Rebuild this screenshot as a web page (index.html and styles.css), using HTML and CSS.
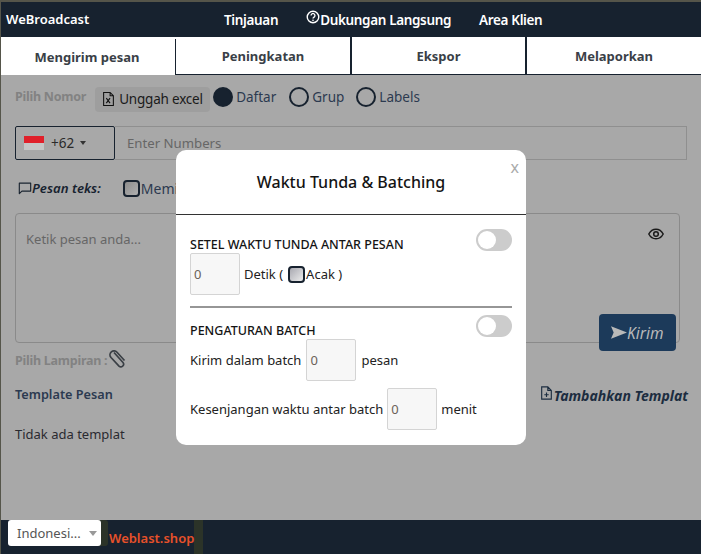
FILE: index.html
```html
<!DOCTYPE html>
<html lang="id">
<head>
<meta charset="utf-8">
<title>WeBroadcast</title>
<link rel="stylesheet" href="styles.css">
</head>
<body>
<div class="app">
  <header class="topbar">
    <div class="brand">WeBroadcast</div>
    <nav class="topnav">
      <a>Tinjauan</a>
      <a class="help"><svg class="help-icon" viewBox="0 0 16 16"><circle cx="8" cy="8" r="6.6" fill="none" stroke="currentColor" stroke-width="1.6"/><path d="M5.8 6.2a2.2 2.2 0 1 1 3.4 1.9c-.8.5-1.2.9-1.2 1.7" fill="none" stroke="currentColor" stroke-width="1.5"/><circle cx="8" cy="11.8" r=".95" fill="currentColor"/></svg>Dukungan Langsung</a>
      <a>Area Klien</a>
    </nav>
  </header>
  <div class="tabs">
    <div class="tab tab-active">Mengirim pesan</div>
    <div class="tab">Peningkatan</div>
    <div class="tab">Ekspor</div>
    <div class="tab tab-last">Melaporkan</div>
  </div>
  <main class="content">
    <div class="row-number">
      <span class="muted-label">Pilih Nomor</span>
      <span class="upload"><svg class="upload-icon" viewBox="0 0 16 18"><path d="M2 1h8l4 4v12H2z M10 1v4h4" fill="none" stroke="#111" stroke-width="1.3"/><path d="M5.3 8l4.6 6M9.900 8l-4.600 6" stroke="#111" stroke-width="1.4"/></svg>Unggah excel</span>
      <span class="radio radio-on"></span><span class="radio-label">Daftar</span>
      <span class="radio radio-gap1"></span><span class="radio-label">Grup</span>
      <span class="radio radio-gap2"></span><span class="radio-label">Labels</span>
    </div>
    <div class="row-phone">
      <div class="country"><span class="flag"></span><span>+62</span><span class="caret"></span></div>
      <div class="numbers">Enter Numbers</div>
    </div>
    <div class="row-message">
      <svg class="chat-icon" viewBox="0 0 16 16"><path d="M1.500 2.500h13v9H4.500l-3 3z" fill="none" stroke="#1a2430" stroke-width="1.300" stroke-linejoin="round"/></svg>
      <span class="message-label">Pesan teks:</span>
      <span class="check check-gap"></span><span class="memi">Memilih</span>
    </div>
    <div class="textarea">
      <span class="placeholder">Ketik pesan anda...</span>
      <svg class="eye" viewBox="0 0 16 16"><path d="M.8 8C2.500 4.800 5 3.200 8 3.200s5.500 1.600 7.200 4.800C13.500 11.200 11 12.800 8 12.800S2.500 11.200.8 8z" fill="none" stroke="#1a1a1a" stroke-width="1.500"/><circle cx="8" cy="8" r="2.300" fill="none" stroke="#1a1a1a" stroke-width="1.500"/></svg>
      <span class="send"><svg class="send-icon" viewBox="0 0 18 16"><path d="M0 1l18 7-18 7 3-7z" fill="#b9b9b9"/></svg>Kirim</span>
    </div>
    <div class="row-attach">
      <span class="muted-label">Pilih Lampiran :</span>
      <svg class="clip" viewBox="0 0 20 20"><path d="M6 4.500l9 10a2.700 2.700 0 0 1-4 3.600L3 9.500a4 4 0 0 1 6-5.300l7.500 8.300" fill="none" stroke="#3a3f45" stroke-width="1.700"/></svg>
    </div>
    <div class="row-template">
      <span class="template-title">Template Pesan</span>
      <span class="template-add"><svg class="add-icon" viewBox="0 0 14 16"><path d="M1.500 1h7l4 4v10h-11z M8.500 1v4h4" fill="none" stroke="#1c2d40" stroke-width="1.300"/><path d="M7 7.500v5M4.500 10h5" stroke="#1c2d40" stroke-width="1.300"/></svg>Tambahkan Templat</span>
    </div>
    <p class="empty">Tidak ada templat</p>
    <div class="overlay">
      <section class="modal">
        <span class="close">x</span>
        <h2 class="modal-title">Waktu Tunda &amp; Batching</h2>
        <div class="modal-body">
          <div class="setting">
            <span class="toggle"></span>
            <div class="setting-title">SETEL WAKTU TUNDA ANTAR PESAN</div>
            <div class="field-row"><span class="num">0</span><span>Detik (</span><span class="check check-small"></span><span>Acak )</span></div>
          </div>
          <hr class="divider">
          <div class="setting">
            <span class="toggle toggle-batch"></span>
            <div class="setting-title title-batch">PENGATURAN BATCH</div>
            <div class="field-row batch-row"><span>Kirim dalam batch</span><span class="num">0</span><span>pesan</span></div>
            <div class="field-row gap-row"><span>Kesenjangan waktu antar batch</span><span class="num">0</span><span>menit</span></div>
          </div>
        </div>
      </section>
    </div>
  </main>
  <footer class="footer">
    <span class="lang">Indonesi...<span class="lang-caret"></span></span>
    <span class="site">Weblast.shop</span>
  </footer>
</div>
</body>
</html>
```
FILE: styles.css
```css
* { box-sizing: border-box; }
html, body { margin: 0; padding: 0; }
body {
  width: 701px;
  height: 554px;
  overflow: hidden;
  background: #55554a;
  font-family: "Noto Sans", "Open Sans", sans-serif;
  font-size: 14px;
  color: #1a1a1a;
}
.app {
  margin: 2px 0 0 1px;
  height: 552px;
  display: flex;
  flex-direction: column;
  background: #a8a8a8;
}
.topbar {
  height: 35px;
  flex: none;
  background: #17222f;
  color: #fff;
  display: flex;
  align-items: center;
  font-weight: 600;
  font-size: 13px;
}
.brand { margin-left: 5px; width: 218px; margin-top: -2px; }
.topnav { display: flex; gap: 28px; font-size: 13.500px; letter-spacing: -0.35px; }
.help { display: flex; align-items: center; }
.help-icon { width: 14px; height: 14px; margin-top: -5px; }
.tabs {
  height: 38px;
  flex: none;
  display: flex;
  background: #fff;
  border-bottom: 1px solid #17222f;
  font-weight: 700;
  font-size: 13px;
  color: #3a3f47;
}
.tab {
  width: 175px;
  display: flex;
  align-items: center;
  justify-content: center;
  border-right: 2px solid #17222f;
}
.tab:nth-child(2) { width: 176px; }
.tab-active {
  margin-top: 2px;
  height: 36px;
  background: #fff;
  border-right: 1px solid #17222f;
  margin-bottom: -1px;
  padding-right: 2px;
}
.tab-last { border-right: 0; flex: 1; }
.content {
  position: relative;
  flex: 1;
  padding: 0 13px 0 14px;
}
.row-number {
  height: 37px;
  padding-top: 6px;
  display: flex;
  align-items: center;
  font-size: 13px;
}
.muted-label { color: #828282; font-weight: 700; font-size: 12.500px; letter-spacing: -0.25px; }
.upload {
  margin: 5px 0 0 9px;
  width: 115px;
  height: 25px;
  flex: none;
  background: #9e9e9e;
  border-radius: 4px;
  display: flex;
  align-items: center;
  padding-left: 7px;
  color: #1a1a1a;
  font-size: 13.500px;
  letter-spacing: -0.2px;
}
.upload-icon { width: 13px; height: 16px; margin-right: 4px; }
.radio {
  width: 20px;
  height: 20px;
  flex: none;
  border-radius: 50%;
  border: 2px solid #17222f;
  margin-left: 3px;
  margin-right: 3px;
}
.radio-on { background: #17222f; }
.radio-gap1 { margin-left: 13px; }
.radio-gap2 { margin-left: 12px; }
.radio-label { color: #2c3a50; font-size: 13.500px; }
.row-phone {
  margin-top: 14px;
  height: 34px;
  display: flex;
}
.country {
  width: 100px;
  flex: none;
  border: 1px solid #17222f;
  border-radius: 2px;
  display: flex;
  align-items: center;
  padding-left: 8px;
  color: #2a2a2a;
  font-size: 13.500px;
}
.flag {
  width: 20px;
  height: 14px;
  background: linear-gradient(#e0202a 50%, #c6c6c6 50%);
  margin-right: 7px;
}
.caret {
  margin-left: 6px;
  border: 3.500px solid transparent;
  border-top: 4px solid #333;
  border-bottom: 0;
}
.numbers {
  flex: 1;
  margin-right: 1px;
  border: 1px solid #8f8f8f;
  border-left: 0;
  padding: 7px 0 0 12px;
  color: #666;
  font-size: 13.200px;
}
.row-message {
  margin-top: 18px;
  height: 20px;
  display: flex;
  align-items: center;
  font-size: 14px;
}
.chat-icon { width: 14px; height: 14px; margin: 0 0 0 3px; }
.message-label { font-style: italic; font-weight: 600; font-size: 13.200px; color: #17222f; }
.check {
  display: inline-block;
  flex: none;
  border: 2px solid #17222f;
  border-radius: 4px;
  background: linear-gradient(135deg, #8d8d8d, #b0b0b0);
}
.check-gap { width: 17px; height: 17px; margin-left: 22px; }
.memi { color: #2c3a50; margin-left: 1px; }
.textarea {
  position: relative;
  margin-top: 15px;
  width: 665px;
  height: 130px;
  border: 1px solid #8a8a8a;
  border-radius: 4px;
  padding: 16px 0 0 10px;
  font-size: 13px;
  color: #666;
}
.eye { position: absolute; right: 15px; top: 12px; width: 16px; height: 16px; }
.send {
  position: absolute;
  right: 3px;
  bottom: -9px;
  width: 77px;
  height: 37px;
  background: #1c3a5a;
  border-radius: 4px;
  display: flex;
  align-items: center;
  padding-left: 12px;
  color: #b9b9b9;
  font-style: italic;
  font-size: 15.500px;
}
.send-icon { width: 16px; height: 15px; }
.row-attach {
  margin-top: 5px;
  height: 24px;
  display: flex;
  align-items: center;
}
.clip { width: 20px; height: 20px; margin-left: 1px; margin-top: -4px; }
.row-template {
  margin-top: 10px;
  height: 24px;
  display: flex;
  justify-content: space-between;
  align-items: center;
  font-weight: 600;
  font-size: 12.700px;
}
.template-title { color: #2c3a50; }
.template-add { font-style: italic; font-weight: 700; color: #1c2d40; display: flex; align-items: center; font-size: 14px; padding-top: 2px; }
.add-icon { width: 13px; height: 14px; margin-top: -4px; margin-right: 1px; }
.empty { margin: 19px 0 0; font-size: 13px; color: #2a2a30; }
.overlay {
  position: absolute;
  inset: 0;
}
.modal {
  position: absolute;
  left: 175px;
  top: 75px;
  width: 350px;
  height: 295px;
  background: #fff;
  border-radius: 10px;
}
.close {
  position: absolute;
  right: 7px;
  top: 6px;
  font-size: 16px;
  color: #aaa;
}
.modal-title {
  margin: 0;
  height: 65px;
  border-bottom: 1px solid #333;
  text-align: center;
  font-size: 16px;
  font-weight: 500;
  line-height: 64px;
  color: #141414;
}
.modal-body { padding: 0 14px; }
.setting { position: relative; }
.toggle {
  position: absolute;
  right: 0;
  top: 14px;
  width: 36px;
  height: 22px;
  border-radius: 11px;
  background: #ccc;
}
.toggle::before {
  content: "";
  position: absolute;
  left: 2px;
  top: 2px;
  width: 18px;
  height: 18px;
  border-radius: 50%;
  background: #fff;
}
.toggle-batch { top: 7px; }
.setting-title {
  padding-top: 22px;
  line-height: 16px;
  font-size: 12.500px;
  font-weight: 500;
  color: #141414;
}
.title-batch { padding-top: 15px; }
.field-row {
  display: flex;
  align-items: center;
  gap: 4px;
  font-size: 13px;
  color: #222;
}
.batch-row { gap: 5px; }
.num {
  width: 50px;
  height: 42px;
  flex: none;
  background: #f7f7f7;
  border: 1px solid #d4d4d4;
  border-radius: 2px;
  padding-left: 3px;
  line-height: 40px;
  color: #6b6258;
}
.check-small {
  width: 17px;
  height: 17px;
  margin: 0 -3px 0 1px;
  background: linear-gradient(135deg, #a8a8b0, #ececec);
}
.divider {
  margin: 11px 0 0;
  border: 0;
  height: 2px;
  background: #969696;
}
.gap-row { margin-top: 7px; }
.footer {
  height: 34px;
  flex: none;
  background: #17222f;
  display: flex;
  align-items: flex-start;
}
.lang {
  margin-left: 7px;
  width: 93px;
  height: 26px;
  background: #fff;
  border-radius: 3px;
  padding-left: 9px;
  display: flex;
  align-items: center;
  font-size: 13px;
  color: #555;
  box-shadow: 7px 0 0 #2b3328;
}
.lang-caret {
  margin-left: 8px;
  border: 4px solid transparent;
  border-top: 5px solid #999;
  border-bottom: 0;
}
.site {
  margin-left: 8px;
  width: 85px;
  padding-top: 9px;
  height: 34px;
  color: #e8512a;
  font-weight: 600;
  font-size: 13px;
  box-shadow: 9px 0 0 #2b3328;
}
```
